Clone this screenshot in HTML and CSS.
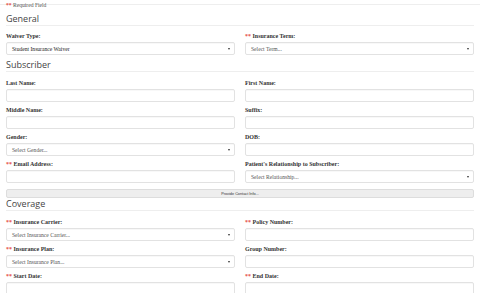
FILE: index.html
```html
<!DOCTYPE html>
<html lang="en">
<head>
    <meta charset="UTF-8">
    <meta name="viewport" content="width=device-width, initial-scale=1.0">
    <title>Insurance Waiver</title>
    <link rel="stylesheet" href="styles.css">
</head>
<body>
    <div class="page">
        <p class="required-note"><span class="req">**</span> Required Field</p>

        <h2 class="section-title first">General</h2>
        <div class="form-grid general">
            <div class="field">
                <label>Waiver Type:</label>
                <div class="select"><span>Student Insurance Waiver</span></div>
            </div>
            <div class="field">
                <label><span class="req">**</span> Insurance Term:</label>
                <div class="select placeholder"><span>Select Term...</span></div>
            </div>
        </div>

        <h2 class="section-title">Subscriber</h2>
        <div class="form-grid">
            <div class="field">
                <label>Last Name:</label>
                <div class="input"></div>
            </div>
            <div class="field">
                <label>First Name:</label>
                <div class="input"></div>
            </div>
            <div class="field">
                <label>Middle Name:</label>
                <div class="input"></div>
            </div>
            <div class="field">
                <label>Suffix:</label>
                <div class="input"></div>
            </div>
            <div class="field">
                <label>Gender:</label>
                <div class="select placeholder"><span>Select Gender...</span></div>
            </div>
            <div class="field">
                <label>DOB:</label>
                <div class="input"></div>
            </div>
            <div class="field">
                <label><span class="req">**</span> Email Address:</label>
                <div class="input"></div>
            </div>
            <div class="field">
                <label>Patient's Relationship to Subscriber:</label>
                <div class="select placeholder"><span>Select Relationship...</span></div>
            </div>
        </div>
        <button class="contact-btn">Provide Contact Info...</button>

        <h2 class="section-title coverage">Coverage</h2>
        <div class="form-grid">
            <div class="field">
                <label><span class="req">**</span> Insurance Carrier:</label>
                <div class="select placeholder"><span>Select Insurance Carrier...</span></div>
            </div>
            <div class="field">
                <label><span class="req">**</span> Policy Number:</label>
                <div class="input"></div>
            </div>
            <div class="field">
                <label><span class="req">**</span> Insurance Plan:</label>
                <div class="select placeholder"><span>Select Insurance Plan...</span></div>
            </div>
            <div class="field">
                <label>Group Number:</label>
                <div class="input"></div>
            </div>
            <div class="field">
                <label><span class="req">**</span> Start Date:</label>
                <div class="input"></div>
            </div>
            <div class="field">
                <label><span class="req">**</span> End Date:</label>
                <div class="input"></div>
            </div>
        </div>
    </div>
</body>
</html>
```

FILE: styles.css
```css
body {
    margin: 0;
    font-family: 'Liberation Serif', 'DejaVu Serif', serif;
    color: #333;
    background: #fff;
}

.page {
    margin-top: 4px;
    padding: 0 6px;
    border-top: 1px solid #eee;
}

.required-note {
    margin: -3px 0 0;
    font-size: 5.6px;
    line-height: 6px;
    color: #555;
}

.req {
    color: #e5534b;
    font-weight: bold;
}

.section-title {
    margin: 0;
    padding-bottom: 1px;
    font-family: 'Open Sans', 'Liberation Sans', sans-serif;
    font-weight: 400;
    font-size: 9px;
    line-height: 11px;
    color: #444;
    border-bottom: 1px solid #eee;
}

.section-title.first {
    margin-top: 5px;
}

.form-grid {
    display: grid;
    grid-template-columns: 1fr 1fr;
    column-gap: 10px;
    margin-top: 7px;
}

.form-grid.general {
    margin-top: 6px;
}

.field {
    margin-bottom: 4px;
}

.field label {
    display: block;
    margin-bottom: 2px;
    font-size: 6px;
    line-height: 8px;
    font-weight: bold;
    color: #333;
}

.input,
.select {
    box-sizing: border-box;
    height: 13px;
    border: 1px solid #e2e2e2;
    border-radius: 2px;
    background: #fff;
    box-shadow: inset 0 1px 1px rgba(0, 0, 0, 0.03);
}

.select {
    position: relative;
    display: flex;
    align-items: center;
    padding: 0 5px;
    font-size: 5.6px;
    color: #222;
}

.select.placeholder {
    color: #555;
}

.select::after {
    content: '';
    position: absolute;
    right: 4px;
    top: 5px;
    border-left: 1.3px solid transparent;
    border-right: 1.3px solid transparent;
    border-top: 2px solid #333;
}

.contact-btn {
    display: block;
    box-sizing: border-box;
    width: 100%;
    height: 9px;
    margin: 2px 0 0;
    padding: 0;
    font-family: 'Liberation Sans', sans-serif;
    font-size: 3.8px;
    color: #333;
    background: #eee;
    border: 1px solid #ddd;
    border-radius: 2px;
}
```
